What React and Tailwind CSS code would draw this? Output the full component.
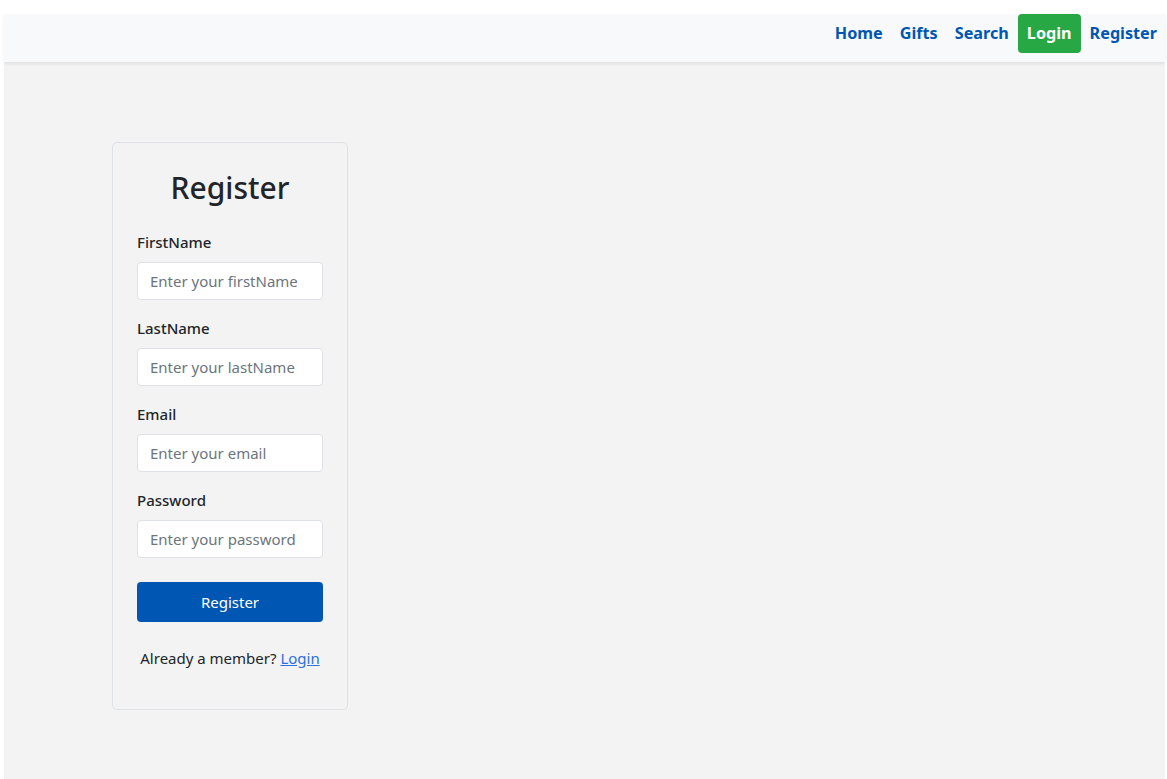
import React from "react";

const font = { fontFamily: '"Noto Sans", "Open Sans", sans-serif' };

function Field({ label, placeholder, type = "text" }) {
  return (
    <div className="mb-4">
      <label className="block mb-2 text-[15px] leading-6 font-medium text-[#212529]">{label}</label>
      <input
        type={type}
        placeholder={placeholder}
        className="block w-full h-[38px] px-3 rounded-[4px] border border-[#dee2e6] bg-white text-[15px] text-[#212529] placeholder:text-[#6c757d] outline-none"
      />
    </div>
  );
}

export default function App() {
  return (
    <div className="bg-white pt-[14px] pl-1 pr-[2px]" style={font}>
      <div className="min-h-[765px] bg-[#f3f3f3]">
        <nav className="h-12 bg-[#f8f9fa] shadow-[0_2px_3px_rgba(0,0,0,0.08)] flex justify-end items-start">
          {["Home", "Gifts", "Search"].map((t) => (
            <a key={t} href="#" className="ml-[1px] px-2 h-[39px] flex items-center text-[16.2px] font-bold text-[#0056b3]">
              {t}
            </a>
          ))}
          <a href="#" className="ml-[1px] px-[9px] h-[39px] flex items-center rounded-[4px] bg-[#28a745] text-[16.2px] font-bold text-white">
            Login
          </a>
          <a href="#" className="ml-[1px] px-2 h-[39px] flex items-center text-[16.2px] font-bold text-[#0056b3]">
            Register
          </a>
        </nav>
        <div className="pt-20 pl-[108px]">
          <div className="w-[236px] border border-[#dee2e6] rounded-[5px] px-6 pt-[25px] pb-[39px]">
            <h2 className="text-[30px] leading-[40px] font-medium text-center text-[#212529] mb-[22px]">Register</h2>
            <Field label="FirstName" placeholder="Enter your firstName" />
            <Field label="LastName" placeholder="Enter your lastName" />
            <Field label="Email" placeholder="Enter your email" type="email" />
            <Field label="Password" placeholder="Enter your password" type="password" />
            <button className="mt-2 w-full h-10 rounded-[4px] bg-[#0056b3] text-white text-[15px]">Register</button>
            <p className="mt-6 text-center text-[15px] leading-6 text-[#212529] whitespace-nowrap">
              Already a member? <a href="#" className="text-[#2f6fe0] underline">Login</a>
            </p>
          </div>
        </div>
      </div>
    </div>
  );
}
